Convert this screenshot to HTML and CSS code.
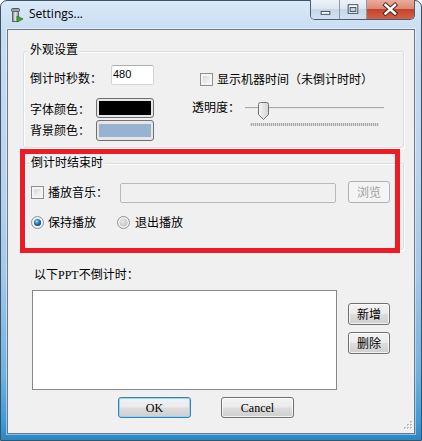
FILE: index.html
```html
<!DOCTYPE html>
<html>
<head>
<meta charset="utf-8">
<title>Settings...</title>
<link rel="stylesheet" href="styles.css">
</head>
<body>
<div class="window">
  <div class="titlebar">
    <svg class="app-icon" width="14" height="16" viewBox="0 0 14 16">
      <defs>
        <linearGradient id="bin" x1="0" x2="1" y1="0" y2="0">
          <stop offset="0" stop-color="#6f7a80"/>
          <stop offset="0.45" stop-color="#e4e8ea"/>
          <stop offset="1" stop-color="#8a949a"/>
        </linearGradient>
      </defs>
      <rect x="1.5" y="1.5" width="8" height="3" rx="1" fill="#9aa4aa" stroke="#4d585e"/>
      <rect x="2.5" y="4.5" width="6" height="10" fill="url(#bin)" stroke="#5a656b"/>
      <path d="M7 9 L13 12 L7 15 Z" fill="#3faa2e" stroke="#217a18" stroke-width="0.8"/>
    </svg>
    <span class="title">Settings...</span>
    <div class="caption">
      <div class="cbtn cmin">
        <svg width="29" height="19" viewBox="0 0 29 19"><rect x="10.5" y="11.5" width="9" height="3" fill="#fff" stroke="#3b4a5c"/></svg>
      </div>
      <div class="cbtn cmax">
        <svg width="27" height="19" viewBox="0 0 27 19"><rect x="8.5" y="4.5" width="10" height="9" fill="#fff" stroke="#3b4a5c"/><rect x="10.5" y="7.5" width="6" height="4" fill="#c9d7e6" stroke="#3b4a5c"/></svg>
      </div>
      <div class="cbtn cclose">
        <svg width="47" height="19" viewBox="0 0 47 19"><path d="M18.5 5 L28 13.5 M28 5 L18.5 13.5" stroke="#4a2a24" stroke-width="4.4" stroke-linecap="square"/><path d="M18.5 5 L28 13.5 M28 5 L18.5 13.5" stroke="#fff" stroke-width="2.4" stroke-linecap="square"/></svg>
      </div>
    </div>
  </div>

  <div class="client">
    <div class="group g1">
      <div class="legend">外观设置</div>
      <div class="row r1">
        <span class="lbl lbl-secs">倒计时秒数：</span>
        <div class="textbox">480</div>
        <span class="check check-clock"></span>
        <span class="lbl lbl-clock">显示机器时间（未倒计时时）</span>
      </div>
      <div class="row r2">
        <span class="lbl lbl-color">字体颜色：</span>
        <div class="colorbtn"><div class="swatch swatch-black"></div></div>
        <span class="lbl lbl-opacity">透明度：</span>
        <svg class="slider" width="139" height="30" viewBox="0 0 139 30">
          <defs>
            <linearGradient id="thumb" x1="0" x2="1" y1="0" y2="0">
              <stop offset="0" stop-color="#f6f6f6"/>
              <stop offset="1" stop-color="#d4d4d4"/>
            </linearGradient>
            <pattern id="ticks" width="2" height="3" patternUnits="userSpaceOnUse">
              <rect x="0" y="0" width="1" height="3" fill="#a9a9a9"/>
              <rect x="1" y="0" width="1" height="3" fill="#dcdcdc"/>
            </pattern>
          </defs>
          <line x1="0" y1="9.5" x2="139" y2="9.5" stroke="#a8a8a8"/>
          <line x1="0" y1="10.5" x2="139" y2="10.5" stroke="#e6e6e6"/>
          <path d="M13.5 6.5 Q13.5 4.5 15.5 4.5 H21.5 Q23.5 4.5 23.5 6.5 V16.5 L18.5 21.5 L13.5 16.5 Z" fill="url(#thumb)" stroke="#707070"/>
          <rect x="5" y="25" width="129" height="3" fill="url(#ticks)"/>
        </svg>
      </div>
      <div class="row r3">
        <span class="lbl lbl-color lbl-bg">背景颜色：</span>
        <div class="colorbtn tall"><div class="swatch swatch-blue"></div></div>
      </div>
    </div>

    <div class="group g2">
      <div class="legend">倒计时结束时</div>
      <div class="row ra">
        <span class="check check-music"></span>
        <span class="lbl lbl-music">播放音乐：</span>
        <div class="textbox disabled wide"></div>
        <div class="btn btn-disabled btn-browse">浏览</div>
      </div>
      <div class="row rb">
        <svg class="radio" width="13" height="13" viewBox="0 0 13 13">
          <defs>
            <radialGradient id="rg1" cx="0.4" cy="0.35" r="0.7">
              <stop offset="0" stop-color="#e8e8e8"/>
              <stop offset="1" stop-color="#c4c4c4"/>
            </radialGradient>
            <radialGradient id="dot" cx="0.4" cy="0.35" r="0.7">
              <stop offset="0" stop-color="#a6e4ff"/>
              <stop offset="0.45" stop-color="#2b82c4"/>
              <stop offset="1" stop-color="#0e3a66"/>
            </radialGradient>
          </defs>
          <circle cx="6.5" cy="6.5" r="6" fill="#f4f4f4" stroke="#8e8f8f"/>
          <circle cx="6.5" cy="6.5" r="3.6" fill="url(#dot)"/>
        </svg>
        <span class="lbl lbl-keep">保持播放</span>
        <svg class="radio radio-2" width="13" height="13" viewBox="0 0 13 13">
          <circle cx="6.5" cy="6.5" r="6" fill="#f4f4f4" stroke="#8e8f8f"/>
          <circle cx="6.5" cy="6.5" r="4" fill="url(#rg1)"/>
        </svg>
        <span class="lbl lbl-exit">退出播放</span>
      </div>
    </div>

    <div class="highlight"></div>

    <div class="list-label">以下<span class="latin">PPT</span>不倒计时：</div>
    <div class="list-row">
      <div class="listbox"></div>
      <div class="side-btns">
        <div class="btn btn-side">新增</div>
        <div class="btn btn-side">删除</div>
      </div>
    </div>
    <div class="dialog-btns">
      <div class="btn btn-dialog btn-default"><span class="latin">OK</span></div>
      <div class="btn btn-dialog btn-cancel"><span class="latin">Cancel</span></div>
    </div>

    <svg class="grip" width="12" height="12" viewBox="0 0 12 12">
      <g fill="#b9b9b9">
        <rect x="9" y="1" width="2" height="2"/>
        <rect x="6" y="4" width="2" height="2"/><rect x="9" y="4" width="2" height="2"/>
        <rect x="3" y="7" width="2" height="2"/><rect x="6" y="7" width="2" height="2"/><rect x="9" y="7" width="2" height="2"/>
      </g>
      <g fill="#fff">
        <rect x="10" y="2" width="1" height="1"/>
        <rect x="7" y="5" width="1" height="1"/><rect x="10" y="5" width="1" height="1"/>
        <rect x="4" y="8" width="1" height="1"/><rect x="7" y="8" width="1" height="1"/><rect x="10" y="8" width="1" height="1"/>
      </g>
    </svg>
  </div>
</div>
</body>
</html>
```

FILE: styles.css
```css
html, body {
  margin: 0;
  padding: 0;
  background: #ffffff;
}

.window {
  width: 422px;
  height: 441px;
  box-sizing: border-box;
  border: 1px solid #3e5266;
  border-radius: 7px 7px 0 0;
  padding: 0 6px 6px 6px;
  background: linear-gradient(180deg, #dbe9f8 0%, #c8dcf2 7%, #bdd5ee 35%, #a3c9ea 62%, #6fb2e0 85%, #3d9bd8 96%, #2c86c6 100%);
  display: flex;
  flex-direction: column;
}

/* ---------- title bar ---------- */
.titlebar {
  height: 28px;
  flex: none;
  display: flex;
  align-items: flex-start;
}

.app-icon {
  margin: 6px 0 0 3px;
  flex: none;
}

.title {
  margin: 5px 0 0 5px;
  font: 12px/16px "Open Sans", "Noto Sans", sans-serif;
  color: #000;
}

.caption {
  margin: -1px 0 0 auto;
  display: flex;
  height: 20px;
  box-sizing: border-box;
  border: 1px solid #4e5c6d;
  border-top: 0;
  border-radius: 0 0 5px 5px;
  overflow: hidden;
}

.cbtn {
  height: 19px;
  display: flex;
}

.cmin, .cmax {
  background: linear-gradient(180deg, #eef3f9 0%, #dce6f1 45%, #c8d7e8 50%, #d3e0ee 100%);
  border-right: 1px solid #8b99aa;
}
.cmin { width: 28px; }
.cmax { width: 26px; }
.cclose {
  width: 47px;
  background: linear-gradient(180deg, #e9ac9d 0%, #dc8b76 45%, #c5442b 50%, #d46148 100%);
}

/* ---------- client area ---------- */
.client {
  position: relative;
  flex: none;
  height: 405px;
  box-sizing: border-box;
  border: 1px solid #6b7886;
  box-shadow: 0 0 0 1px rgba(255, 255, 255, 0.45);
  background: #f0f0f0;
  font: 12px/14px "Noto Sans CJK SC", "Noto Sans", sans-serif;
  color: #000;
  display: flex;
  flex-direction: column;
  align-items: flex-start;
}

.latin {
  font: 12px/14px "Liberation Serif", serif;
}

.group {
  box-sizing: border-box;
  border: 1px solid #d5dfe5;
  border-radius: 3px;
  box-shadow: inset 1px 1px 0 #ffffff, 1px 1px 0 #ffffff;
  display: flex;
  flex-direction: column;
  align-items: flex-start;
  flex: none;
}

.g1 {
  margin: 21px 0 0 15px;
  width: 381px;
  height: 97px;
}

.g2 {
  margin: 15px 0 0 16px;
  width: 380px;
  height: 87px;
}

.legend {
  margin: -10px 0 0 4px;
  padding: 0 2px;
  background: #f0f0f0;
  white-space: nowrap;
}
.g2 .legend { margin-top: -9px; }

.row {
  display: flex;
  align-items: flex-start;
  padding-left: 6px;
  white-space: nowrap;
}

.r1 { margin-top: 9px; height: 20px; }
.r2 { margin-top: 13px; height: 20px; }
.r3 { margin-top: 2px; height: 21px; }

.lbl { flex: none; }
.lbl-secs { width: 81px; margin-top: 6px; }
.lbl-clock { margin: 7px 0 0 4px; }
.lbl-color { width: 66px; margin-top: 4px; }
.lbl-bg { margin-top: 3px; }
.lbl-opacity { width: 48px; margin: 2px 0 0 38px; }

.textbox {
  box-sizing: border-box;
  width: 43px;
  height: 20px;
  border: 1px solid #d2d6dc;
  border-top-color: #abadb3;
  border-radius: 2px;
  background: #fff;
  padding: 2px 0 0 1px;
  font: 11px/13px "Liberation Sans", Arial, sans-serif;
}
.textbox.disabled {
  background: #f0f0f0;
  border: 1px solid #b9b9b9;
}
.textbox.wide {
  width: 216px;
  margin: 2px 0 0 12px;
}

.check {
  flex: none;
  box-sizing: border-box;
  width: 13px;
  height: 13px;
  border: 1px solid #8e8f8f;
  background: linear-gradient(135deg, #c9cdd3 0%, #eceef0 60%, #f8f8f8 100%);
  box-shadow: inset 0 0 0 2px #f4f4f4;
}
.check-clock { margin: 8px 0 0 46px; }
.check-music { margin-top: 5px; }

.colorbtn {
  flex: none;
  box-sizing: border-box;
  width: 58px;
  height: 20px;
  border: 1px solid #707070;
  border-radius: 3px;
  padding: 2px;
  background: #e6e6e6;
  display: flex;
}
.colorbtn.tall {
  height: 21px;
  padding: 3px 2px;
}
.swatch { flex: 1; }
.swatch-black { background: #000; }
.swatch-blue { background: #98b3d2; }

.slider {
  flex: none;
  margin-left: 5px;
  overflow: visible;
}

.ra { margin-top: 12px; height: 22px; }
.rb { margin-top: 11px; height: 16px; }

.lbl-music { margin: 4px 0 0 4px; width: 60px; }
.radio { flex: none; margin-top: 2px; }
.radio-2 { margin-left: 21px; }
.lbl-keep { margin: 1px 0 0 4px; width: 48px; }
.lbl-exit { margin: 1px 0 0 5px; }

/* ---------- buttons ---------- */
.btn {
  flex: none;
  box-sizing: border-box;
  border: 1px solid #707070;
  border-radius: 3px;
  background: linear-gradient(180deg, #f3f3f3 0%, #ebebeb 48%, #dddddd 52%, #cfcfcf 100%);
  box-shadow: inset 0 0 0 1px rgba(255, 255, 255, 0.75);
  display: flex;
  align-items: center;
  justify-content: center;
}
.btn-browse {
  width: 42px;
  height: 22px;
  margin-left: 12px;
}
.btn-disabled {
  border-color: #adb2b5;
  background: #f4f4f4;
  box-shadow: none;
  color: #a0a0a0;
}
.btn-side {
  width: 42px;
  height: 22px;
}
.btn-dialog {
  width: 73px;
  height: 21px;
}
.btn-default {
  border-color: #3c7fb1;
  box-shadow: inset 0 0 0 1px #8fd6f7;
  margin-left: 110px;
}
.btn-cancel { margin-left: 30px; }

/* ---------- highlight annotation ---------- */
.highlight {
  position: absolute;
  left: 12px;
  top: 119px;
  width: 380px;
  height: 104px;
  box-sizing: border-box;
  border: 5px solid #ed1c24;
}

/* ---------- list section ---------- */
.list-label {
  margin: 17px 0 0 26px;
  white-space: nowrap;
}

.list-row {
  display: flex;
  align-items: flex-start;
  margin-top: 8px;
}

.listbox {
  margin-left: 24px;
  width: 305px;
  height: 100px;
  box-sizing: border-box;
  border: 1px solid #828790;
  background: #fff;
}

.side-btns {
  margin: 13px 0 0 11px;
  display: flex;
  flex-direction: column;
  gap: 7px;
}

.dialog-btns {
  display: flex;
  margin-top: 7px;
}

.grip {
  position: absolute;
  right: 1px;
  bottom: 1px;
}
```
